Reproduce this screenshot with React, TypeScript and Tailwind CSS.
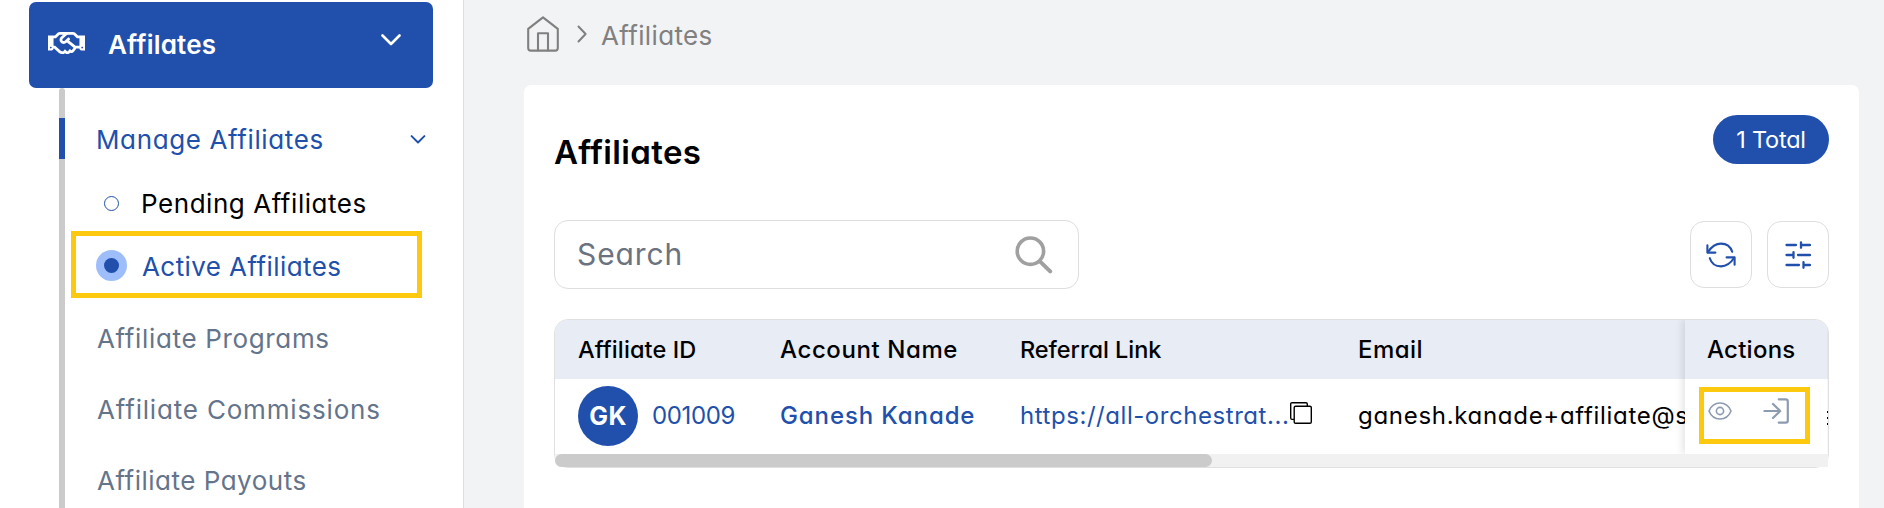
import type { ReactNode } from "react";
import { FaRegHandshake } from "react-icons/fa";

function Chevron({ className }: { className: string }) {
  return (
    <svg viewBox="0 0 20 12" fill="none" stroke="currentColor" strokeLinecap="round" strokeLinejoin="round" className={className}>
      <path d="M1.5 1.5L10 10L18.5 1.5" />
    </svg>
  );
}

function HomeIcon() {
  return (
    <svg viewBox="0 0 32 36" fill="none" stroke="currentColor" strokeWidth="2.1" strokeLinecap="round" strokeLinejoin="round" className="h-9 w-8">
      <path d="M1.2 12.8L16 1.3L30.8 12.8V32a2.6 2.6 0 0 1-2.6 2.6H3.8A2.6 2.6 0 0 1 1.2 32Z" />
      <path d="M11 34.5V17.3H21V34.5" />
    </svg>
  );
}

function SearchIcon() {
  return (
    <svg viewBox="0 0 38 38" fill="none" stroke="#a0a0a0" strokeLinecap="round" className="h-[38px] w-[38px]">
      <circle cx="15.4" cy="15.2" r="13.2" strokeWidth="3.6" />
      <path d="M25.2 25.6L35.2 35.4" strokeWidth="4" />
    </svg>
  );
}

function RefreshIcon() {
  return (
    <svg viewBox="0 0 30 30" fill="none" stroke="currentColor" strokeWidth="2.1" strokeLinecap="round" strokeLinejoin="round" className="h-[30px] w-[30px]">
      <path d="M1.4 5.2V12.6H9.4" />
      <path d="M1.8 12.2C5.2 7 9.4 3.6 15 3.6c5.5 0 9.6 3.2 11.2 8.2" />
      <g transform="rotate(180 15 15)">
        <path d="M1.4 5.2V12.6H9.4" />
        <path d="M1.8 12.2C5.2 7 9.4 3.6 15 3.6c5.5 0 9.6 3.2 11.2 8.2" />
      </g>
    </svg>
  );
}

function SlidersIcon() {
  return (
    <svg viewBox="0 0 26 28" fill="none" stroke="currentColor" strokeWidth="2.3" strokeLinecap="round" className="h-7 w-[26px]">
      <path d="M1.5 4H11M16 1.4V6.8M16 4H25" />
      <path d="M1.5 14H8.5M8.5 11.2V16.8M13 14H25" />
      <path d="M1.5 24H14M18.5 21.2V26.8M18.5 24H25" />
    </svg>
  );
}

function CopyIcon() {
  return (
    <svg viewBox="0 0 22 22" fill="none" stroke="#000" strokeWidth="1.4" className="mb-1.5 h-[22px] w-[22px] shrink-0">
      <path d="M4 17.4H2a1.3 1.3 0 0 1-1.3-1.3V2A1.3 1.3 0 0 1 2 .7H16A1.3 1.3 0 0 1 17.3 2V4" />
      <rect x="4.2" y="4.2" width="17.1" height="17.1" rx="1.4" />
    </svg>
  );
}

function EyeIcon() {
  return (
    <svg viewBox="0 0 24 18" fill="none" stroke="currentColor" strokeWidth="1.6" className="h-[18px] w-6">
      <path d="M1 9C3 4 7 1 12 1S21 4 23 9C21 14 17 17 12 17S3 14 1 9Z" />
      <circle cx="12" cy="9" r="3.6" />
    </svg>
  );
}

function LoginIcon() {
  return (
    <svg viewBox="0 0 26 26" fill="none" stroke="currentColor" strokeWidth="2.2" strokeLinecap="round" strokeLinejoin="round" className="h-[26px] w-[26px]">
      <path d="M1.4 13H17.2M10 6L17.2 13L10 20" />
      <path d="M15.8 1.3H22.6A2.2 2.2 0 0 1 24.8 3.5V22.5A2.2 2.2 0 0 1 22.6 24.7H15.8" />
    </svg>
  );
}

function SubItem({ children }: { children: ReactNode }) {
  return <div className="flex h-[71px] items-center pl-8 text-[26px] text-[#64748b]">{children}</div>;
}

function Sidebar() {
  return (
    <aside className="flex w-[464px] shrink-0 flex-col border-r border-[#dcdee2] bg-white pt-0.5 pl-[29px]">
      <div className="flex h-[86px] w-[404px] shrink-0 items-center rounded-[7px] bg-[#2150ac] pr-8 pl-[19px] text-white">
        <FaRegHandshake className="mb-[5px] h-[30px] w-[37px]" />
        <span className="mb-0.5 ml-[23px] flex-1 text-[26px] font-semibold tracking-[0.2px]">Affilates</span>
        <Chevron className="mb-[11px] h-3 w-5 stroke-[2.6]" />
      </div>
      <div className="flex flex-1 pl-[30px]">
        <div className="flex w-1.5 flex-col overflow-hidden rounded-t-[3px] bg-[#cbcbcb]">
          <div className="mt-[30px] h-[41px] bg-[#2150ac]" />
        </div>
        <nav className="flex flex-1 flex-col pt-[30px]">
          <div className="flex h-[42px] items-center justify-between pr-[37px] pl-[31px] text-[26px] text-[#2150ac]">
            <span className="pt-px tracking-[0.62px]">Manage Affiliates</span>
            <Chevron className="h-[9px] w-4 stroke-[2.6]" />
          </div>
          <div className="mt-[15px] flex h-14 items-center pl-[39px] text-[26px] text-black">
            <span className="h-[15px] w-[15px] rounded-full border border-[#2150ac]" />
            <span className="ml-[22px] pt-px tracking-[0.55px]">Pending Affiliates</span>
          </div>
          <div className="ml-1.5 flex h-[67px] w-[351px] items-center border-5 border-[#fdc90f] pt-0.5 pl-5 text-[26px] text-[#2150ac]">
            <span className="flex h-[31px] w-[31px] items-center justify-center rounded-full bg-[#9dbefa]">
              <span className="h-[15px] w-[15px] rounded-full bg-[#2150ac]" />
            </span>
            <span className="ml-[15px] pt-px tracking-[0.42px]">Active Affiliates</span>
          </div>
          <div className="mt-[5px]">
            <SubItem><span className="tracking-[0.65px]">Affiliate Programs</span></SubItem>
            <SubItem><span className="tracking-[0.82px]">Affiliate Commissions</span></SubItem>
            <SubItem><span className="tracking-[0.5px]">Affiliate Payouts</span></SubItem>
          </div>
        </nav>
      </div>
    </aside>
  );
}

function IconButton({ children }: { children: ReactNode }) {
  return (
    <button className="flex h-[67px] w-[62px] items-center justify-center rounded-[14px] border border-[#dedede] text-[#2150ac]">
      {children}
    </button>
  );
}

function AffiliatesTable() {
  return (
    <div className="mt-[30px] h-[149px] rounded-[14px] border border-[#e0e0e0]">
      <div className="flex overflow-hidden rounded-t-[13px]">
        <div className="w-[1130px] shrink-0 overflow-hidden text-2xl">
          <div className="grid h-[59px] grid-cols-[202px_240px_338px_327px] items-center bg-[#e8ecf5] pl-[23px] font-medium text-black">
            <span className="text-[23.5px] tracking-[0.1px]">Affiliate ID</span>
            <span className="tracking-[0.6px]">Account Name</span>
            <span className="text-[23.5px] tracking-[-0.05px]">Referral Link</span>
            <span className="tracking-[0.45px]">Email</span>
          </div>
          <div className="grid h-[75px] grid-cols-[202px_240px_338px_327px] items-center pb-px pl-[23px] text-[#2150ac]">
            <div className="flex items-center">
              <span className="flex h-[60px] w-[60px] items-center justify-center rounded-full bg-[#2150ac] pt-0.5 text-[25px] font-bold tracking-[0.5px] text-white">GK</span>
              <span className="ml-3.5 tracking-[-0.34px]">001009</span>
            </div>
            <span className="font-medium tracking-[0.9px]">Ganesh Kanade</span>
            <div className="flex items-center">
              <span className="w-[270px] shrink-0 tracking-[0.55px]">https://all-orchestrat...</span>
              <CopyIcon />
            </div>
            <span className="tracking-[0.7px] text-black">ganesh.kanade+affiliate@s</span>
          </div>
        </div>
        <div className="relative w-[142px] shrink-0 shadow-[-2px_0_8px_rgba(0,0,0,0.12)]">
          <div className="flex h-[59px] items-center bg-[#e8ecf5] pl-[22px] text-2xl font-medium tracking-[0.25px] text-black">Actions</div>
          <div className="h-[75px] bg-white pt-2 pl-3.5">
            <div className="flex h-[57px] w-[111px] items-start justify-between border-5 border-[#fdc90f] pt-1.5 pr-4 pl-1 text-[#8d9bb0]">
              <span className="pt-1"><EyeIcon /></span>
              <LoginIcon />
            </div>
          </div>
        </div>
        <div className="flex w-px flex-col">
          <div className="h-[59px] bg-[#e8ecf5]" />
          <div className="flex flex-col gap-1 pt-8">
            <span className="h-0.5 bg-black" />
            <span className="h-0.5 bg-black" />
            <span className="h-0.5 bg-black" />
          </div>
        </div>
      </div>
      <div className="h-[13px] rounded-bl-[6px] bg-[#f1f1f1]">
        <div className="h-[13px] w-[657px] rounded-full bg-[#cbcbcb]" />
      </div>
    </div>
  );
}

export default function App() {
  return (
    <div className="flex h-[508px] w-[1884px] overflow-hidden bg-[#f2f3f5] font-['Inter','Open_Sans',sans-serif] whitespace-nowrap [font-feature-settings:'cv11']">
      <Sidebar />
      <main className="flex flex-1 flex-col pr-[25px] pl-[60px]">
        <div className="mb-[15px] flex h-[70px] shrink-0 items-center pl-[3px] text-[#808080]">
          <span className="-mt-0.5"><HomeIcon /></span>
          <svg viewBox="0 0 10 18" fill="none" stroke="currentColor" strokeWidth="2" strokeLinecap="round" strokeLinejoin="round" className="-mt-0.5 ml-[18px] h-[18px] w-2.5">
            <path d="M1.5 1.5L8.6 9L1.5 16.5" />
          </svg>
          <span className="ml-3.5 text-[26px] tracking-[0.35px]">Affiliates</span>
        </div>
        <section className="flex-1 rounded-t-[7px] bg-white px-[30px] pt-[30px]">
          <div className="flex h-14 items-start justify-between">
            <h1 className="mt-[17px] text-[33px] leading-10 font-semibold tracking-[0.35px] text-black">Affiliates</h1>
            <span className="flex h-[49px] w-[116px] items-center justify-center rounded-full bg-[#2150ac] text-[23.5px] tracking-[-0.2px] text-white">1 Total</span>
          </div>
          <div className="mt-[49px] flex items-center justify-between">
            <div className="flex h-[69px] w-[525px] items-center justify-between rounded-[14px] border border-[#dedede] pr-[25px] pl-[22px]">
              <span className="text-[30px] tracking-[0.9px] text-[#6b7280]">Search</span>
              <SearchIcon />
            </div>
            <div className="flex gap-[15px]">
              <IconButton><RefreshIcon /></IconButton>
              <IconButton><SlidersIcon /></IconButton>
            </div>
          </div>
          <AffiliatesTable />
        </section>
      </main>
    </div>
  );
}
